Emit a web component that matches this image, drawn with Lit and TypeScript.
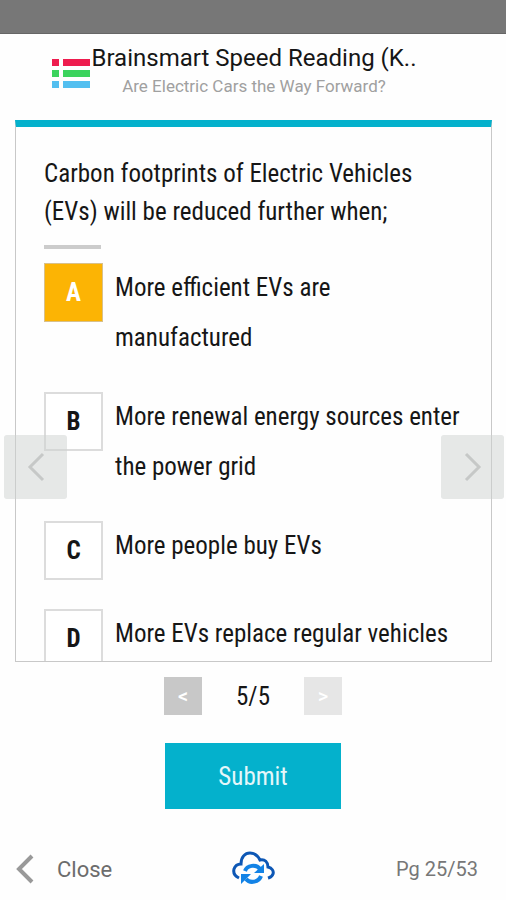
import { LitElement, html, css } from "lit";
import { customElement, state } from "lit/decorators.js";

interface Option {
  key: string;
  text: string;
}

const OPTIONS: Option[] = [
  { key: "A", text: "More efficient EVs are manufactured" },
  { key: "B", text: "More renewal energy sources enter the power grid" },
  { key: "C", text: "More people buy EVs" },
  { key: "D", text: "More EVs replace regular vehicles" },
];

@customElement("app-root")
export class AppRoot extends LitElement {
  @state() private selected = "A";

  static styles = css`
    :host {
      display: flex;
      flex-direction: column;
      height: 100vh;
      background: #fefefe;
      color: #161616;
      font-family: Roboto, "Liberation Sans", sans-serif;
      --narrow: "Roboto Condensed", "Liberation Sans Narrow", Roboto, sans-serif;
      --teal: #04b1cc;
    }
    * {
      box-sizing: border-box;
    }
    h1,
    h2,
    p {
      margin: 0;
      font-weight: 400;
    }
    button {
      border: 0;
      padding: 0;
      font-family: inherit;
      cursor: pointer;
    }
    .status {
      flex: none;
      height: 34px;
      background: #777;
      border-bottom: 1px solid #666;
    }
    .header {
      flex: none;
      display: flex;
      justify-content: center;
      height: 86px;
      padding: 8px 38px 0 0;
    }
    .logo {
      flex: none;
      width: 40px;
      height: 32px;
      margin-top: 16px;
    }
    .titles {
      text-align: center;
      white-space: nowrap;
    }
    .title {
      font-size: 24px;
      line-height: 32px;
    }
    .subtitle {
      font-size: 17px;
      line-height: 24px;
      color: #a0a0a0;
    }
    .stage {
      position: relative;
      flex: 1;
      min-height: 0;
      display: flex;
      padding: 0 14px 0 15px;
    }
    .card {
      flex: 1;
      min-width: 0;
      overflow: hidden;
      border: 1px solid #c8c8c8;
      border-top: 7px solid var(--teal);
      padding: 28px;
      font-family: var(--narrow);
      font-size: 25px;
    }
    .question {
      font-size: 25px;
      line-height: 38px;
    }
    .rule {
      width: 57px;
      height: 4px;
      margin: 14px 0;
      border: 0;
      background: #ccc;
    }
    .options {
      display: flex;
      flex-direction: column;
      gap: 29px;
      margin: 0;
      padding: 0;
      border: 0;
    }
    .option {
      display: grid;
      grid-template-columns: 59px 1fr;
      column-gap: 12px;
      cursor: pointer;
    }
    .box {
      grid-area: 1 / 1;
      appearance: none;
      width: 59px;
      height: 59px;
      margin: 0;
      border: 2px solid #dcdcdc;
      background: #fff;
    }
    .box:checked {
      border: 1px solid #d8c08a;
      background: #fcb404;
    }
    .letter {
      grid-area: 1 / 1;
      z-index: 1;
      font-weight: 700;
      line-height: 60px;
      height: 59px;
      text-align: center;
      pointer-events: none;
    }
    .box:checked + .letter {
      color: #fff;
    }
    .answer {
      grid-area: 1 / 2;
      line-height: 50px;
    }
    .turn {
      position: absolute;
      z-index: 2;
      top: 315px;
      width: 63px;
      height: 64px;
      border-radius: 3px;
      background: rgba(205, 210, 208, 0.5);
      display: grid;
      place-items: center;
    }
    .back {
      left: 4px;
    }
    .next {
      right: 2px;
    }
    .pager {
      flex: none;
      display: flex;
      justify-content: center;
      align-items: center;
      margin-top: 15px;
      font-family: var(--narrow);
      font-size: 25px;
    }
    .step {
      width: 38px;
      height: 38px;
      color: #fff;
      background: #c8c8c8;
      font-family: Roboto, sans-serif;
      font-size: 20px;
      font-weight: 500;
    }
    .step:disabled {
      background: #e6e6e6;
    }
    .count {
      width: 102px;
      text-align: center;
    }
    .submit {
      flex: none;
      align-self: center;
      width: 176px;
      height: 66px;
      margin-top: 28px;
      background: var(--teal);
      color: #e4f7fa;
      font-family: var(--narrow);
      font-size: 25px;
    }
    .footer {
      flex: none;
      display: grid;
      grid-template-columns: 1fr auto 1fr;
      align-items: center;
      height: 62px;
      margin-top: 29px;
      padding: 0 16px;
      color: #6c6c6c;
    }
    .close {
      justify-self: start;
      display: flex;
      align-items: center;
      gap: 23px;
      background: none;
      color: inherit;
      font-size: 22px;
    }
    .sync {
      background: none;
      width: 44px;
      height: 36px;
    }
    .page {
      justify-self: end;
      padding-right: 12px;
      font-size: 20px;
      color: #777;
    }
    svg {
      display: block;
    }
  `;

  private renderOption(o: Option) {
    return html`<label class="option">
      <input
        class="box"
        type="radio"
        name="answer"
        .value=${o.key}
        .checked=${this.selected === o.key}
        @change=${() => (this.selected = o.key)}
      />
      <span class="letter">${o.key}</span>
      <span class="answer">${o.text}</span>
    </label>`;
  }

  render() {
    return html`
      <div class="status"></div>
      <header class="header">
        <svg class="logo" viewBox="0 0 40 32" aria-hidden="true">
          <path fill="#ee1c4e" d="M0 1h7v7H0zM11 1h27v7H11z" />
          <path fill="#3bd35d" d="M0 12h7v7H0zM11 12h27v7H11z" />
          <path fill="#53bff0" d="M0 23h7v7H0zM11 23h27v7H11z" />
        </svg>
        <div class="titles">
          <h1 class="title">Brainsmart Speed Reading (K..</h1>
          <p class="subtitle">Are Electric Cars the Way Forward?</p>
        </div>
      </header>
      <main class="stage">
        <section class="card">
          <h2 class="question">
            Carbon footprints of Electric Vehicles (EVs) will be reduced further when;
          </h2>
          <hr class="rule" />
          <fieldset class="options" aria-label="Answers">
            ${OPTIONS.map((o) => this.renderOption(o))}
          </fieldset>
        </section>
        <button class="turn back" aria-label="Previous page">
          <svg width="20" height="32" viewBox="0 0 20 32" fill="none" stroke="#c6c8c7" stroke-width="3">
            <path d="M17 3 4 16l13 13" />
          </svg>
        </button>
        <button class="turn next" aria-label="Next page">
          <svg width="20" height="32" viewBox="0 0 20 32" fill="none" stroke="#c6c8c7" stroke-width="3">
            <path d="m3 3 13 13L3 29" />
          </svg>
        </button>
      </main>
      <nav class="pager" aria-label="Questions">
        <button class="step" aria-label="Previous question">&lt;</button>
        <span class="count">5/5</span>
        <button class="step" aria-label="Next question" disabled>&gt;</button>
      </nav>
      <button class="submit">Submit</button>
      <footer class="footer">
        <button class="close">
          <svg width="18" height="30" viewBox="0 0 18 30" fill="none" stroke="#999" stroke-width="4">
            <path d="M16 2 3 15l13 13" />
          </svg>
          Close
        </button>
        <button class="sync" aria-label="Sync">
          <svg width="44" height="36" viewBox="0 0 44 36" fill="none">
            <path
              stroke="#0d57b5"
              stroke-width="3"
              d="M8 27C4 25 2 22 3 18c1-3 3-5 7-5C10 6 14 2 19 2c5 0 8 3 10 7 5-1 8 2 8 7 4 1 6 4 5 7-1 3-2 3-5 4"
            />
            <path stroke="#1383e6" stroke-width="4" d="M14 20c2-6 11-7 15-2M30 25c-2 6-11 8-15 3" />
            <path fill="#1383e6" d="M33 13v9H23zM10 33v-10h10z" />
          </svg>
        </button>
        <span class="page">Pg 25/53</span>
      </footer>
    `;
  }
}
